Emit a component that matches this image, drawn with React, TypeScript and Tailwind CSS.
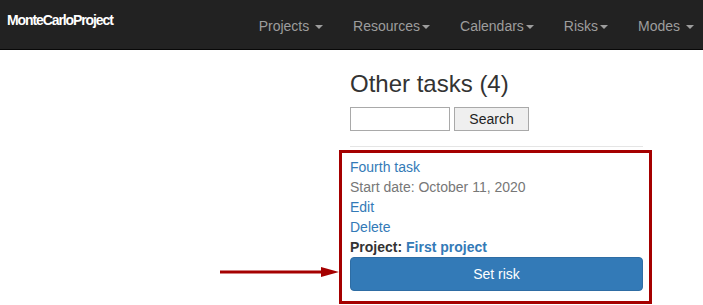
import React from 'react';

const Caret: React.FC = () => (
  <span className="inline-block w-0 h-0 ml-[2px] align-middle border-t-[4px] border-t-[#9d9d9d] border-x-[4px] border-x-transparent" />
);

const navItems = [
  { label: 'Projects', spaced: true },
  { label: 'Resources', spaced: false },
  { label: 'Calendars', spaced: false },
  { label: 'Risks', spaced: false },
  { label: 'Modes', spaced: true },
];

export default function App() {
  return (
    <div className="relative w-[703px] h-[305px] overflow-hidden bg-white font-['Liberation_Sans',Arial,sans-serif] text-[14px] text-[#333]">
      {/* navbar */}
      <nav className="flex h-[50px] items-start bg-[#222] border-b border-[#080808]">
        <div className="pl-[7px] pt-[10px] text-[14px] font-bold text-white tracking-[-1.1px] leading-[20px]">
          MonteCarloProject
        </div>
        <ul className="ml-auto flex -mr-[6px] shrink-0">
          {navItems.map((item) => (
            <li key={item.label} className="px-[15px] pt-[16px] pb-[14px] leading-[20px] text-[#9d9d9d] whitespace-nowrap">
              {item.label}
              {item.spaced && ' '}
              <Caret />
            </li>
          ))}
        </ul>
      </nav>

      <div className="pl-[350px] w-[643px] box-content">
        <h2 className="mt-[21px] text-[24px] leading-[26px] text-[#333]">Other tasks (4)</h2>
        <div className="mt-[10px] flex gap-[4px]">
          <input className="w-[100px] h-[24px] border border-[#a9a9a9] bg-white" />
          <button className="w-[75px] h-[24px] border border-[#a9a9a9] bg-[#efefef] text-[14px] text-[#222]">
            Search
          </button>
        </div>

        <div className="mt-[15px] border-t border-[#e5e5e5] w-[293px]" />

        <div className="mt-[3px] -ml-[11px] w-[313px] border-[3px] border-[#a50000] pl-[8px] pr-[6px] pt-[4px] pb-[10px] leading-[20px]">
          <div className="text-[#337ab7]">Fourth task</div>
          <div className="text-[#777]">Start date: October 11, 2020</div>
          <div className="text-[#337ab7]">Edit</div>
          <div className="text-[#337ab7]">Delete</div>
          <div>
            <b className="text-[#333]">Project: </b>
            <b className="text-[#337ab7]">First project</b>
          </div>
          <button className="w-full h-[34px] rounded-[4px] bg-[#337ab7] border border-[#2e6da4] text-white text-[14px]">
            Set risk
          </button>
        </div>
      </div>

      {/* annotation arrow */}
      <svg className="absolute left-[219px] top-[265px]" width="122" height="14" viewBox="0 0 122 14">
        <line x1="1" y1="7" x2="106" y2="7" stroke="#a50000" strokeWidth="3" />
        <polygon points="102,2 120,7 102,12" fill="#a50000" />
      </svg>
    </div>
  );
}
